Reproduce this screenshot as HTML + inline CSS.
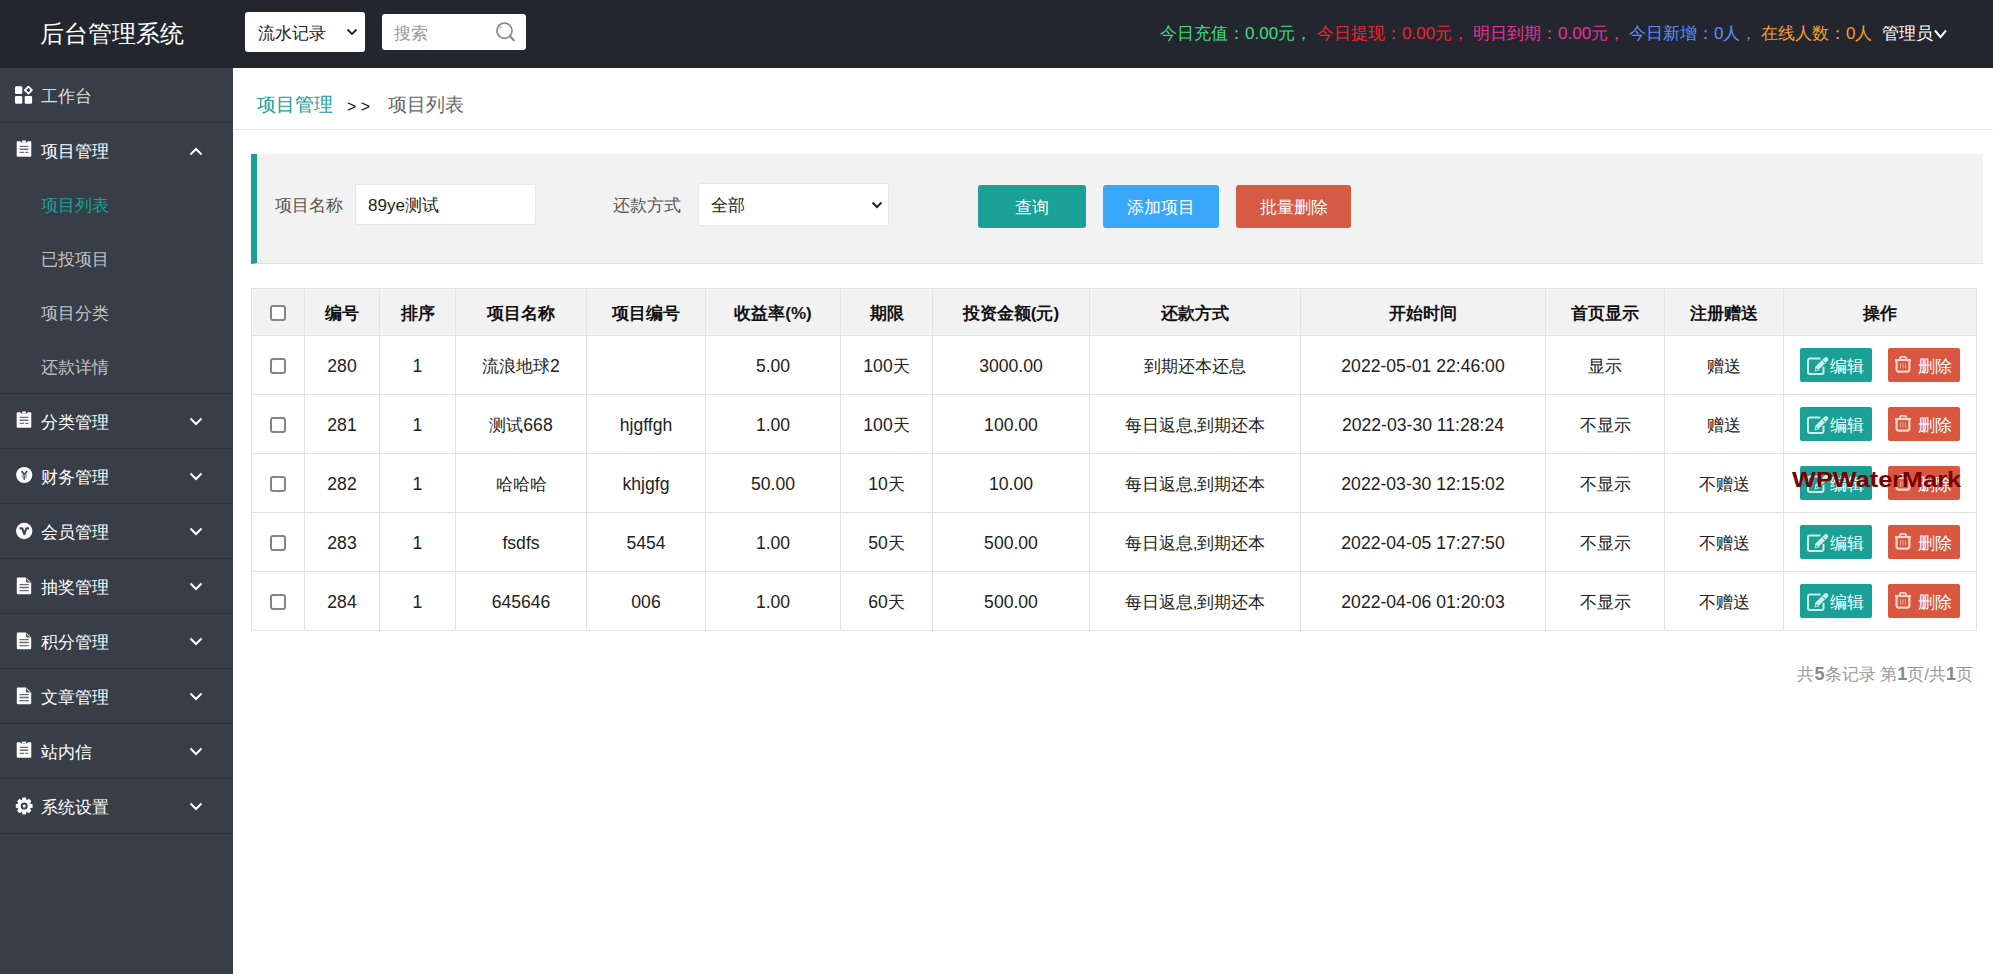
<!DOCTYPE html>
<html><head><meta charset="utf-8">
<style>
*{box-sizing:border-box;margin:0;padding:0}
html,body{width:1993px;height:974px;overflow:hidden;background:#fff;font-family:"Liberation Sans",sans-serif;color:#333}
.abs{position:absolute}
#hdr{position:absolute;left:0;top:0;width:1993px;height:68px;background:#23262e}
#logo{position:absolute;left:40px;top:18px;font-size:24px;line-height:32px;color:#fff;white-space:nowrap}
#sel1{position:absolute;left:245px;top:12px;width:120px;height:40px;background:#fff;border-radius:3px}
#sel1 span{position:absolute;left:13px;top:11.5px;font-size:17px;line-height:20px;color:#222}
#sel1 svg{position:absolute;left:101px;top:16px}
#srch{position:absolute;left:382px;top:14px;width:144px;height:36px;background:#fff;border-radius:3px}
#srch span{position:absolute;left:12px;top:9.5px;font-size:17px;line-height:20px;color:#999}
#srch svg{position:absolute;left:112px;top:7px}
#stats{position:absolute;left:1160px;top:23px;font-size:17px;line-height:22px;white-space:nowrap}
#stats span{position:absolute;top:0}
#admin{position:absolute;left:1882px;top:23px;font-size:17px;line-height:22px;color:#fff;white-space:nowrap}
#side{position:absolute;left:0;top:68px;width:233px;height:906px;background:#383e48}
.sep{position:absolute;left:0;width:233px;height:1px;background:#2d333d;box-shadow:0 2px 0 #3b414b}
.mi{position:absolute;left:0;width:233px;height:55px}
.mi .t{position:absolute;left:41px;top:19px;font-size:17px;line-height:20px;color:#fff;white-space:nowrap}
.mi svg.ic{position:absolute;left:15px;top:18px}
.mi svg.ch{position:absolute;left:189px;top:23px}
.si{position:absolute;left:41px;font-size:17px;line-height:20px;white-space:nowrap}
#side .mi, #side .sep, #side .si, #side .pic{margin-top:-68px}
.pic{position:absolute}
#crumb{position:absolute;left:233px;top:68px;width:1760px;height:62px;border-bottom:1px solid #e6e6e6}
#crumb span{position:absolute;top:26px;font-size:19px;line-height:22px;white-space:nowrap}
#panel{position:absolute;left:251px;top:154px;width:1732px;height:110px;background:#f2f2f2;border-left:6px solid #1aa094;border-bottom:1px solid #dedede}
.lbl{position:absolute;font-size:17px;line-height:20px;color:#555;white-space:nowrap}
.inp{position:absolute;background:#fff;border:1px solid #e8e8e8;border-radius:2px}
.inp span{position:absolute;font-size:17px;line-height:20px;color:#222;white-space:nowrap}
.btn{position:absolute;top:185px;height:43px;border-radius:3px;color:#fff;font-size:17px;line-height:45px;text-align:center}
.vl{position:absolute;top:288px;width:1px;height:343px;background:#e2e2e2}
.hl{position:absolute;left:251px;width:1726px;height:1px;background:#e2e2e2}
.c{position:absolute;display:flex;align-items:center;justify-content:center;font-size:17px;line-height:20px;color:#222;white-space:nowrap;padding-top:3px}
.c .l{font-size:17.6px}
.th{padding-top:3px}
.th{font-weight:bold;color:#111}
.cb{display:block;margin-top:-2px;width:16px;height:16px;border:2px solid #858585;border-radius:3px;background:#fff}
.eb,.db{position:absolute;width:72px;height:34px;border-radius:2px;color:#fff;font-size:17px;line-height:33px}
.eb{left:1800px;background:#1aa094}
.db{left:1888px;background:#d9573f}
.eb .bt{position:absolute;left:29.5px;top:1.5px}
.db .bt{position:absolute;left:30px;top:2px}
#pg{position:absolute;right:20px;top:664px;font-size:17px;line-height:20px;color:#999;white-space:nowrap}
#pg b{color:#888}
#pg .l{font-size:18px}
#wm{position:absolute;left:1792px;top:467px;font-size:22px;line-height:26px;font-weight:bold;color:#7d0000;white-space:nowrap;transform:scaleX(1.15);transform-origin:0 0}
</style></head><body>
<div id="hdr">
  <div id="logo">后台管理系统</div>
  <div id="sel1"><span>流水记录</span><svg width="12" height="8" viewBox="0 0 12 8"><path d="M1.5 1.5L6 6L10.5 1.5" stroke="#222" stroke-width="1.8" fill="none"/></svg></div>
  <div id="srch"><span>搜索</span><svg width="22" height="22" viewBox="0 0 22 22"><circle cx="10.5" cy="9.7" r="7.6" stroke="#8a8a8a" stroke-width="1.7" fill="none"/><path d="M16 15.3L19.8 19.2" stroke="#8a8a8a" stroke-width="2.2" stroke-linecap="round"/><path d="M5.6 8A5.4 5.4 0 0 1 7.6 5.2" stroke="#bbb" stroke-width="1.2" fill="none"/></svg></div>
  <div id="stats">
    <span style="left:0;color:#3ddc84">今日充值：0.00元，</span>
    <span style="left:157px;color:#f5222d">今日提现：0.00元，</span>
    <span style="left:313px;color:#eb2f96">明日到期：0.00元，</span>
    <span style="left:469px;color:#5b8ff9">今日新增：0人，</span>
    <span style="left:601px;color:#f39c33">在线人数：0人</span>
  </div>
  <div id="admin">管理员<svg width="13" height="10" viewBox="0 0 13 10" style="margin-left:0.5px;vertical-align:0"><path d="M1 1.5L6.5 8.2L12 1.5" stroke="#fff" stroke-width="2" fill="none"/></svg></div>
</div>
<div id="side">
<div class="sep" style="top:122px"></div>
<div class="sep" style="top:393px"></div>
<div class="sep" style="top:448px"></div>
<div class="sep" style="top:503px"></div>
<div class="sep" style="top:558px"></div>
<div class="sep" style="top:613px"></div>
<div class="sep" style="top:668px"></div>
<div class="sep" style="top:723px"></div>
<div class="sep" style="top:778px"></div>
<div class="sep" style="top:833px"></div>
<svg class="pic" style="left:15px;top:86px" width="18" height="18" viewBox="0 0 18 18"><rect x="0" y="0.3" width="7.3" height="7.8" rx="1.3" fill="#fff"/><rect x="0" y="10" width="7.3" height="7.7" rx="1.3" fill="#fff"/><rect x="9.7" y="10" width="7.4" height="7.7" rx="1.3" fill="#fff"/><path d="M13.4 0.6L16.9 4.1L13.4 7.6L9.9 4.1z" fill="none" stroke="#fff" stroke-width="1.8" stroke-linejoin="round"/></svg>
<div class="mi" style="top:68px"><div class="t" style="color:#ddd">工作台</div></div>
<svg class="pic" style="left:16px;top:140px" width="16" height="18" viewBox="0 0 16 18"><path d="M0.7 2.2a1 1 0 0 1 1-1H4L5.5 2.6H10.5L12 1.2h2.3a1 1 0 0 1 1 1V15.8a1 1 0 0 1-1 1H1.7a1 1 0 0 1-1-1z" fill="#fff"/><rect x="5.9" y="0.4" width="4.2" height="2.2" rx="0.9" fill="#fff"/><path d="M3.6 6.4h8.8M3.6 9.3h8.8M3.6 12.4h4.6M9.4 12.4h3" stroke="#6b6e76" stroke-width="1.4"/></svg>
<div class="mi" style="top:124px"><div class="t" style="top:18px">项目管理</div><svg class="ch" width="14" height="9" viewBox="0 0 14 9"><path d="M1.5 7.5L7 2L12.5 7.5" stroke="#fff" stroke-width="2" fill="none"/></svg></div>
<svg class="pic" style="left:16px;top:411px" width="16" height="18" viewBox="0 0 16 18"><path d="M0.7 2.2a1 1 0 0 1 1-1H4L5.5 2.6H10.5L12 1.2h2.3a1 1 0 0 1 1 1V15.8a1 1 0 0 1-1 1H1.7a1 1 0 0 1-1-1z" fill="#fff"/><rect x="5.9" y="0.4" width="4.2" height="2.2" rx="0.9" fill="#fff"/><path d="M3.6 6.4h8.8M3.6 9.3h8.8M3.6 12.4h4.6M9.4 12.4h3" stroke="#6b6e76" stroke-width="1.4"/></svg>
<div class="mi" style="top:394px"><div class="t">分类管理</div><svg class="ch" width="14" height="9" viewBox="0 0 14 9"><path d="M1.5 1.5L7 7L12.5 1.5" stroke="#fff" stroke-width="2" fill="none"/></svg></div>
<svg class="pic" style="left:15px;top:466px" width="18" height="18" viewBox="0 0 18 18"><circle cx="9.2" cy="9" r="8.1" fill="#fff"/><path d="M6.5 4.9L9.3 8.8L12.1 4.9M9.3 8.8V13.8" stroke="#45484f" stroke-width="1.7" fill="none"/><path d="M6.6 9.2h5.4M6.6 11.2h5.4" stroke="#8a8c91" stroke-width="1.2"/></svg>
<div class="mi" style="top:449px"><div class="t">财务管理</div><svg class="ch" width="14" height="9" viewBox="0 0 14 9"><path d="M1.5 1.5L7 7L12.5 1.5" stroke="#fff" stroke-width="2" fill="none"/></svg></div>
<svg class="pic" style="left:15px;top:522px" width="18" height="18" viewBox="0 0 18 18"><circle cx="9.2" cy="9" r="8.2" fill="#fff"/><path d="M4.6 6.3h2.6L9.3 12L11.4 6.3h2.6" stroke="#45484f" stroke-width="2.2" fill="none" stroke-linejoin="round"/></svg>
<div class="mi" style="top:504px"><div class="t">会员管理</div><svg class="ch" width="14" height="9" viewBox="0 0 14 9"><path d="M1.5 1.5L7 7L12.5 1.5" stroke="#fff" stroke-width="2" fill="none"/></svg></div>
<svg class="pic" style="left:16px;top:577px" width="16" height="18" viewBox="0 0 16 18"><path d="M0.8 1.5a1 1 0 0 1 1-1H10L15.2 5.4V16.2a1 1 0 0 1-1 1H1.8a1 1 0 0 1-1-1z" fill="#fff"/><path d="M10 0.5L15.2 5.4H11a1 1 0 0 1-1-1z" fill="#5b5e66"/><path d="M11 1.6Q11.8 3.6 14 4.4" stroke="#ddd" stroke-width="1" fill="none"/><path d="M3.4 7.6h9.4M3.4 10.5h9.4M3.4 13.6h9.4" stroke="#6b6e76" stroke-width="1.4"/></svg>
<div class="mi" style="top:559px"><div class="t">抽奖管理</div><svg class="ch" width="14" height="9" viewBox="0 0 14 9"><path d="M1.5 1.5L7 7L12.5 1.5" stroke="#fff" stroke-width="2" fill="none"/></svg></div>
<svg class="pic" style="left:16px;top:632px" width="16" height="18" viewBox="0 0 16 18"><path d="M0.8 1.5a1 1 0 0 1 1-1H10L15.2 5.4V16.2a1 1 0 0 1-1 1H1.8a1 1 0 0 1-1-1z" fill="#fff"/><path d="M10 0.5L15.2 5.4H11a1 1 0 0 1-1-1z" fill="#5b5e66"/><path d="M11 1.6Q11.8 3.6 14 4.4" stroke="#ddd" stroke-width="1" fill="none"/><path d="M3.4 7.6h9.4M3.4 10.5h9.4M3.4 13.6h9.4" stroke="#6b6e76" stroke-width="1.4"/></svg>
<div class="mi" style="top:614px"><div class="t">积分管理</div><svg class="ch" width="14" height="9" viewBox="0 0 14 9"><path d="M1.5 1.5L7 7L12.5 1.5" stroke="#fff" stroke-width="2" fill="none"/></svg></div>
<svg class="pic" style="left:16px;top:687px" width="16" height="18" viewBox="0 0 16 18"><path d="M0.8 1.5a1 1 0 0 1 1-1H10L15.2 5.4V16.2a1 1 0 0 1-1 1H1.8a1 1 0 0 1-1-1z" fill="#fff"/><path d="M10 0.5L15.2 5.4H11a1 1 0 0 1-1-1z" fill="#5b5e66"/><path d="M11 1.6Q11.8 3.6 14 4.4" stroke="#ddd" stroke-width="1" fill="none"/><path d="M3.4 7.6h9.4M3.4 10.5h9.4M3.4 13.6h9.4" stroke="#6b6e76" stroke-width="1.4"/></svg>
<div class="mi" style="top:669px"><div class="t">文章管理</div><svg class="ch" width="14" height="9" viewBox="0 0 14 9"><path d="M1.5 1.5L7 7L12.5 1.5" stroke="#fff" stroke-width="2" fill="none"/></svg></div>
<svg class="pic" style="left:16px;top:741px" width="16" height="18" viewBox="0 0 16 18"><path d="M0.7 2.2a1 1 0 0 1 1-1H4L5.5 2.6H10.5L12 1.2h2.3a1 1 0 0 1 1 1V15.8a1 1 0 0 1-1 1H1.7a1 1 0 0 1-1-1z" fill="#fff"/><rect x="5.9" y="0.4" width="4.2" height="2.2" rx="0.9" fill="#fff"/><path d="M3.6 6.4h8.8M3.6 9.3h8.8M3.6 12.4h4.6M9.4 12.4h3" stroke="#6b6e76" stroke-width="1.4"/></svg>
<div class="mi" style="top:724px"><div class="t">站内信</div><svg class="ch" width="14" height="9" viewBox="0 0 14 9"><path d="M1.5 1.5L7 7L12.5 1.5" stroke="#fff" stroke-width="2" fill="none"/></svg></div>
<svg class="pic" style="left:15px;top:797px" width="18" height="18" viewBox="-9.2 -9 18 18"><g fill="#fff"><path d="M-1.7 -8.4H1.7L2.5 -5H-2.5z" transform="rotate(0)"/><path d="M-1.7 -8.4H1.7L2.5 -5H-2.5z" transform="rotate(45)"/><path d="M-1.7 -8.4H1.7L2.5 -5H-2.5z" transform="rotate(90)"/><path d="M-1.7 -8.4H1.7L2.5 -5H-2.5z" transform="rotate(135)"/><path d="M-1.7 -8.4H1.7L2.5 -5H-2.5z" transform="rotate(180)"/><path d="M-1.7 -8.4H1.7L2.5 -5H-2.5z" transform="rotate(225)"/><path d="M-1.7 -8.4H1.7L2.5 -5H-2.5z" transform="rotate(270)"/><path d="M-1.7 -8.4H1.7L2.5 -5H-2.5z" transform="rotate(315)"/><circle r="6.2"/></g><circle r="2.5" fill="none" stroke="#383e48" stroke-width="2"/></svg>
<div class="mi" style="top:779px"><div class="t">系统设置</div><svg class="ch" width="14" height="9" viewBox="0 0 14 9"><path d="M1.5 1.5L7 7L12.5 1.5" stroke="#fff" stroke-width="2" fill="none"/></svg></div>
<div class="si" style="top:196px;color:#1aa094">项目列表</div>
<div class="si" style="top:250px;color:#c2c2c2">已投项目</div>
<div class="si" style="top:304px;color:#c2c2c2">项目分类</div>
<div class="si" style="top:358px;color:#c2c2c2">还款详情</div>
</div>
<div id="crumb">
  <span style="left:24px;color:#1aa094">项目管理</span>
  <span style="left:114px;top:28px;color:#111;font-size:16px">&gt; &gt;</span>
  <span style="left:155px;color:#666">项目列表</span>
</div>
<div id="panel"></div>
<div class="lbl" style="left:275px;top:196px">项目名称</div>
<div class="inp" style="left:355px;top:184px;width:181px;height:41px"><span style="left:12px;top:11px">89ye测试</span></div>
<div class="lbl" style="left:613px;top:196px">还款方式</div>
<div class="inp" style="left:698px;top:183px;width:191px;height:43px"><span style="left:12px;top:12px">全部</span><svg width="12" height="8" viewBox="0 0 12 8" style="position:absolute;left:172px;top:16.5px"><path d="M1.5 1.5L6 6L10.5 1.5" stroke="#222" stroke-width="2" fill="none"/></svg></div>
<div class="btn" style="left:978px;width:108px;background:#1aa094">查询</div>
<div class="btn" style="left:1103px;width:116px;background:#3aa8f8">添加项目</div>
<div class="btn" style="left:1236px;width:115px;background:#d65b45">批量删除</div>
<div class="abs" style="left:251px;top:288px;width:1726px;height:47px;background:#f2f2f2"></div>
<div class="vl" style="left:251px"></div>
<div class="vl" style="left:304px"></div>
<div class="vl" style="left:379px"></div>
<div class="vl" style="left:455px"></div>
<div class="vl" style="left:586px"></div>
<div class="vl" style="left:705px"></div>
<div class="vl" style="left:840px"></div>
<div class="vl" style="left:932px"></div>
<div class="vl" style="left:1089px"></div>
<div class="vl" style="left:1300px"></div>
<div class="vl" style="left:1545px"></div>
<div class="vl" style="left:1664px"></div>
<div class="vl" style="left:1783px"></div>
<div class="vl" style="left:1976px"></div>
<div class="hl" style="top:288px"></div>
<div class="hl" style="top:335px"></div>
<div class="hl" style="top:394px"></div>
<div class="hl" style="top:453px"></div>
<div class="hl" style="top:512px"></div>
<div class="hl" style="top:571px"></div>
<div class="hl" style="top:630px"></div>
<div class="c" style="left:252px;top:289px;width:52px;height:46px"><div><span class="cb"></span></div></div>
<div class="c th" style="left:305px;top:289px;width:74px;height:46px"><div>编号</div></div>
<div class="c th" style="left:380px;top:289px;width:75px;height:46px"><div>排序</div></div>
<div class="c th" style="left:456px;top:289px;width:130px;height:46px"><div>项目名称</div></div>
<div class="c th" style="left:587px;top:289px;width:118px;height:46px"><div>项目编号</div></div>
<div class="c th" style="left:706px;top:289px;width:134px;height:46px"><div>收益率(%)</div></div>
<div class="c th" style="left:841px;top:289px;width:91px;height:46px"><div>期限</div></div>
<div class="c th" style="left:933px;top:289px;width:156px;height:46px"><div>投资金额(元)</div></div>
<div class="c th" style="left:1090px;top:289px;width:210px;height:46px"><div>还款方式</div></div>
<div class="c th" style="left:1301px;top:289px;width:244px;height:46px"><div>开始时间</div></div>
<div class="c th" style="left:1546px;top:289px;width:118px;height:46px"><div>首页显示</div></div>
<div class="c th" style="left:1665px;top:289px;width:118px;height:46px"><div>注册赠送</div></div>
<div class="c th" style="left:1784px;top:289px;width:192px;height:46px"><div>操作</div></div>
<div class="c" style="left:252px;top:336px;width:52px;height:58px"><div><span class="cb"></span></div></div>
<div class="c" style="left:305px;top:336px;width:74px;height:58px"><div><span class="l">280</span></div></div>
<div class="c" style="left:380px;top:336px;width:75px;height:58px"><div><span class="l">1</span></div></div>
<div class="c" style="left:456px;top:336px;width:130px;height:58px"><div>流浪地球<span class="l">2</span></div></div>
<div class="c" style="left:587px;top:336px;width:118px;height:58px"><div></div></div>
<div class="c" style="left:706px;top:336px;width:134px;height:58px"><div><span class="l">5.00</span></div></div>
<div class="c" style="left:841px;top:336px;width:91px;height:58px"><div><span class="l">100</span>天</div></div>
<div class="c" style="left:933px;top:336px;width:156px;height:58px"><div><span class="l">3000.00</span></div></div>
<div class="c" style="left:1090px;top:336px;width:210px;height:58px"><div>到期还本还息</div></div>
<div class="c" style="left:1301px;top:336px;width:244px;height:58px"><div><span class="l">2022-05-01 22:46:00</span></div></div>
<div class="c" style="left:1546px;top:336px;width:118px;height:58px"><div>显示</div></div>
<div class="c" style="left:1665px;top:336px;width:118px;height:58px"><div>赠送</div></div>
<div class="eb" style="top:348px"><svg width="36" height="33" viewBox="0 0 36 33" style="position:absolute;left:0;top:0"><path d="M20.5 10.6H10a2 2 0 0 0-2 2V24a2 2 0 0 0 2 2h11.5a2 2 0 0 0 2-2v-5.2" stroke="#cdeee6" stroke-width="2" fill="none"/><path d="M17.6 19.6L26 11.4" stroke="#cdeee6" stroke-width="4.6" stroke-linecap="round"/><path d="M14.5 23.4L15.7 18.6L19.3 22.2z" fill="#cdeee6"/><path d="M22.6 12.6L25 15" stroke="#1aa094" stroke-width="1"/><circle cx="16.6" cy="21.3" r="0.9" fill="#1aa094"/></svg><span class="bt">编辑</span></div>
<div class="db" style="top:348px"><svg width="36" height="33" viewBox="0 0 36 33" style="position:absolute;left:0;top:0"><path d="M12 11.5V9.8a1 1 0 0 1 1-1h4a1 1 0 0 1 1 1v1.7" stroke="#f6d5cc" stroke-width="1.8" fill="none"/><path d="M7 12h16" stroke="#f6d5cc" stroke-width="2.2"/><path d="M8.6 12.6V21.6a2 2 0 0 0 2 2h8.8a2 2 0 0 0 2-2V12.6" stroke="#f6d5cc" stroke-width="2.2" fill="none"/><path d="M12.6 15.2v5.4M15 15.2v5.4M17.4 15.2v5.4" stroke="#eaa898" stroke-width="1"/></svg><span class="bt">删除</span></div>
<div class="c" style="left:252px;top:395px;width:52px;height:58px"><div><span class="cb"></span></div></div>
<div class="c" style="left:305px;top:395px;width:74px;height:58px"><div><span class="l">281</span></div></div>
<div class="c" style="left:380px;top:395px;width:75px;height:58px"><div><span class="l">1</span></div></div>
<div class="c" style="left:456px;top:395px;width:130px;height:58px"><div>测试<span class="l">668</span></div></div>
<div class="c" style="left:587px;top:395px;width:118px;height:58px"><div><span class="l">hjgffgh</span></div></div>
<div class="c" style="left:706px;top:395px;width:134px;height:58px"><div><span class="l">1.00</span></div></div>
<div class="c" style="left:841px;top:395px;width:91px;height:58px"><div><span class="l">100</span>天</div></div>
<div class="c" style="left:933px;top:395px;width:156px;height:58px"><div><span class="l">100.00</span></div></div>
<div class="c" style="left:1090px;top:395px;width:210px;height:58px"><div>每日返息,到期还本</div></div>
<div class="c" style="left:1301px;top:395px;width:244px;height:58px"><div><span class="l">2022-03-30 11:28:24</span></div></div>
<div class="c" style="left:1546px;top:395px;width:118px;height:58px"><div>不显示</div></div>
<div class="c" style="left:1665px;top:395px;width:118px;height:58px"><div>赠送</div></div>
<div class="eb" style="top:407px"><svg width="36" height="33" viewBox="0 0 36 33" style="position:absolute;left:0;top:0"><path d="M20.5 10.6H10a2 2 0 0 0-2 2V24a2 2 0 0 0 2 2h11.5a2 2 0 0 0 2-2v-5.2" stroke="#cdeee6" stroke-width="2" fill="none"/><path d="M17.6 19.6L26 11.4" stroke="#cdeee6" stroke-width="4.6" stroke-linecap="round"/><path d="M14.5 23.4L15.7 18.6L19.3 22.2z" fill="#cdeee6"/><path d="M22.6 12.6L25 15" stroke="#1aa094" stroke-width="1"/><circle cx="16.6" cy="21.3" r="0.9" fill="#1aa094"/></svg><span class="bt">编辑</span></div>
<div class="db" style="top:407px"><svg width="36" height="33" viewBox="0 0 36 33" style="position:absolute;left:0;top:0"><path d="M12 11.5V9.8a1 1 0 0 1 1-1h4a1 1 0 0 1 1 1v1.7" stroke="#f6d5cc" stroke-width="1.8" fill="none"/><path d="M7 12h16" stroke="#f6d5cc" stroke-width="2.2"/><path d="M8.6 12.6V21.6a2 2 0 0 0 2 2h8.8a2 2 0 0 0 2-2V12.6" stroke="#f6d5cc" stroke-width="2.2" fill="none"/><path d="M12.6 15.2v5.4M15 15.2v5.4M17.4 15.2v5.4" stroke="#eaa898" stroke-width="1"/></svg><span class="bt">删除</span></div>
<div class="c" style="left:252px;top:454px;width:52px;height:58px"><div><span class="cb"></span></div></div>
<div class="c" style="left:305px;top:454px;width:74px;height:58px"><div><span class="l">282</span></div></div>
<div class="c" style="left:380px;top:454px;width:75px;height:58px"><div><span class="l">1</span></div></div>
<div class="c" style="left:456px;top:454px;width:130px;height:58px"><div>哈哈哈</div></div>
<div class="c" style="left:587px;top:454px;width:118px;height:58px"><div><span class="l">khjgfg</span></div></div>
<div class="c" style="left:706px;top:454px;width:134px;height:58px"><div><span class="l">50.00</span></div></div>
<div class="c" style="left:841px;top:454px;width:91px;height:58px"><div><span class="l">10</span>天</div></div>
<div class="c" style="left:933px;top:454px;width:156px;height:58px"><div><span class="l">10.00</span></div></div>
<div class="c" style="left:1090px;top:454px;width:210px;height:58px"><div>每日返息,到期还本</div></div>
<div class="c" style="left:1301px;top:454px;width:244px;height:58px"><div><span class="l">2022-03-30 12:15:02</span></div></div>
<div class="c" style="left:1546px;top:454px;width:118px;height:58px"><div>不显示</div></div>
<div class="c" style="left:1665px;top:454px;width:118px;height:58px"><div>不赠送</div></div>
<div class="eb" style="top:466px"><svg width="36" height="33" viewBox="0 0 36 33" style="position:absolute;left:0;top:0"><path d="M20.5 10.6H10a2 2 0 0 0-2 2V24a2 2 0 0 0 2 2h11.5a2 2 0 0 0 2-2v-5.2" stroke="#cdeee6" stroke-width="2" fill="none"/><path d="M17.6 19.6L26 11.4" stroke="#cdeee6" stroke-width="4.6" stroke-linecap="round"/><path d="M14.5 23.4L15.7 18.6L19.3 22.2z" fill="#cdeee6"/><path d="M22.6 12.6L25 15" stroke="#1aa094" stroke-width="1"/><circle cx="16.6" cy="21.3" r="0.9" fill="#1aa094"/></svg><span class="bt">编辑</span></div>
<div class="db" style="top:466px"><svg width="36" height="33" viewBox="0 0 36 33" style="position:absolute;left:0;top:0"><path d="M12 11.5V9.8a1 1 0 0 1 1-1h4a1 1 0 0 1 1 1v1.7" stroke="#f6d5cc" stroke-width="1.8" fill="none"/><path d="M7 12h16" stroke="#f6d5cc" stroke-width="2.2"/><path d="M8.6 12.6V21.6a2 2 0 0 0 2 2h8.8a2 2 0 0 0 2-2V12.6" stroke="#f6d5cc" stroke-width="2.2" fill="none"/><path d="M12.6 15.2v5.4M15 15.2v5.4M17.4 15.2v5.4" stroke="#eaa898" stroke-width="1"/></svg><span class="bt">删除</span></div>
<div class="c" style="left:252px;top:513px;width:52px;height:58px"><div><span class="cb"></span></div></div>
<div class="c" style="left:305px;top:513px;width:74px;height:58px"><div><span class="l">283</span></div></div>
<div class="c" style="left:380px;top:513px;width:75px;height:58px"><div><span class="l">1</span></div></div>
<div class="c" style="left:456px;top:513px;width:130px;height:58px"><div><span class="l">fsdfs</span></div></div>
<div class="c" style="left:587px;top:513px;width:118px;height:58px"><div><span class="l">5454</span></div></div>
<div class="c" style="left:706px;top:513px;width:134px;height:58px"><div><span class="l">1.00</span></div></div>
<div class="c" style="left:841px;top:513px;width:91px;height:58px"><div><span class="l">50</span>天</div></div>
<div class="c" style="left:933px;top:513px;width:156px;height:58px"><div><span class="l">500.00</span></div></div>
<div class="c" style="left:1090px;top:513px;width:210px;height:58px"><div>每日返息,到期还本</div></div>
<div class="c" style="left:1301px;top:513px;width:244px;height:58px"><div><span class="l">2022-04-05 17:27:50</span></div></div>
<div class="c" style="left:1546px;top:513px;width:118px;height:58px"><div>不显示</div></div>
<div class="c" style="left:1665px;top:513px;width:118px;height:58px"><div>不赠送</div></div>
<div class="eb" style="top:525px"><svg width="36" height="33" viewBox="0 0 36 33" style="position:absolute;left:0;top:0"><path d="M20.5 10.6H10a2 2 0 0 0-2 2V24a2 2 0 0 0 2 2h11.5a2 2 0 0 0 2-2v-5.2" stroke="#cdeee6" stroke-width="2" fill="none"/><path d="M17.6 19.6L26 11.4" stroke="#cdeee6" stroke-width="4.6" stroke-linecap="round"/><path d="M14.5 23.4L15.7 18.6L19.3 22.2z" fill="#cdeee6"/><path d="M22.6 12.6L25 15" stroke="#1aa094" stroke-width="1"/><circle cx="16.6" cy="21.3" r="0.9" fill="#1aa094"/></svg><span class="bt">编辑</span></div>
<div class="db" style="top:525px"><svg width="36" height="33" viewBox="0 0 36 33" style="position:absolute;left:0;top:0"><path d="M12 11.5V9.8a1 1 0 0 1 1-1h4a1 1 0 0 1 1 1v1.7" stroke="#f6d5cc" stroke-width="1.8" fill="none"/><path d="M7 12h16" stroke="#f6d5cc" stroke-width="2.2"/><path d="M8.6 12.6V21.6a2 2 0 0 0 2 2h8.8a2 2 0 0 0 2-2V12.6" stroke="#f6d5cc" stroke-width="2.2" fill="none"/><path d="M12.6 15.2v5.4M15 15.2v5.4M17.4 15.2v5.4" stroke="#eaa898" stroke-width="1"/></svg><span class="bt">删除</span></div>
<div class="c" style="left:252px;top:572px;width:52px;height:58px"><div><span class="cb"></span></div></div>
<div class="c" style="left:305px;top:572px;width:74px;height:58px"><div><span class="l">284</span></div></div>
<div class="c" style="left:380px;top:572px;width:75px;height:58px"><div><span class="l">1</span></div></div>
<div class="c" style="left:456px;top:572px;width:130px;height:58px"><div><span class="l">645646</span></div></div>
<div class="c" style="left:587px;top:572px;width:118px;height:58px"><div><span class="l">006</span></div></div>
<div class="c" style="left:706px;top:572px;width:134px;height:58px"><div><span class="l">1.00</span></div></div>
<div class="c" style="left:841px;top:572px;width:91px;height:58px"><div><span class="l">60</span>天</div></div>
<div class="c" style="left:933px;top:572px;width:156px;height:58px"><div><span class="l">500.00</span></div></div>
<div class="c" style="left:1090px;top:572px;width:210px;height:58px"><div>每日返息,到期还本</div></div>
<div class="c" style="left:1301px;top:572px;width:244px;height:58px"><div><span class="l">2022-04-06 01:20:03</span></div></div>
<div class="c" style="left:1546px;top:572px;width:118px;height:58px"><div>不显示</div></div>
<div class="c" style="left:1665px;top:572px;width:118px;height:58px"><div>不赠送</div></div>
<div class="eb" style="top:584px"><svg width="36" height="33" viewBox="0 0 36 33" style="position:absolute;left:0;top:0"><path d="M20.5 10.6H10a2 2 0 0 0-2 2V24a2 2 0 0 0 2 2h11.5a2 2 0 0 0 2-2v-5.2" stroke="#cdeee6" stroke-width="2" fill="none"/><path d="M17.6 19.6L26 11.4" stroke="#cdeee6" stroke-width="4.6" stroke-linecap="round"/><path d="M14.5 23.4L15.7 18.6L19.3 22.2z" fill="#cdeee6"/><path d="M22.6 12.6L25 15" stroke="#1aa094" stroke-width="1"/><circle cx="16.6" cy="21.3" r="0.9" fill="#1aa094"/></svg><span class="bt">编辑</span></div>
<div class="db" style="top:584px"><svg width="36" height="33" viewBox="0 0 36 33" style="position:absolute;left:0;top:0"><path d="M12 11.5V9.8a1 1 0 0 1 1-1h4a1 1 0 0 1 1 1v1.7" stroke="#f6d5cc" stroke-width="1.8" fill="none"/><path d="M7 12h16" stroke="#f6d5cc" stroke-width="2.2"/><path d="M8.6 12.6V21.6a2 2 0 0 0 2 2h8.8a2 2 0 0 0 2-2V12.6" stroke="#f6d5cc" stroke-width="2.2" fill="none"/><path d="M12.6 15.2v5.4M15 15.2v5.4M17.4 15.2v5.4" stroke="#eaa898" stroke-width="1"/></svg><span class="bt">删除</span></div>
<div id="pg">共<b class="l">5</b>条记录 第<b class="l">1</b>页/共<b class="l">1</b>页</div>
<div id="wm">WPWaterMark</div>
</body></html>
